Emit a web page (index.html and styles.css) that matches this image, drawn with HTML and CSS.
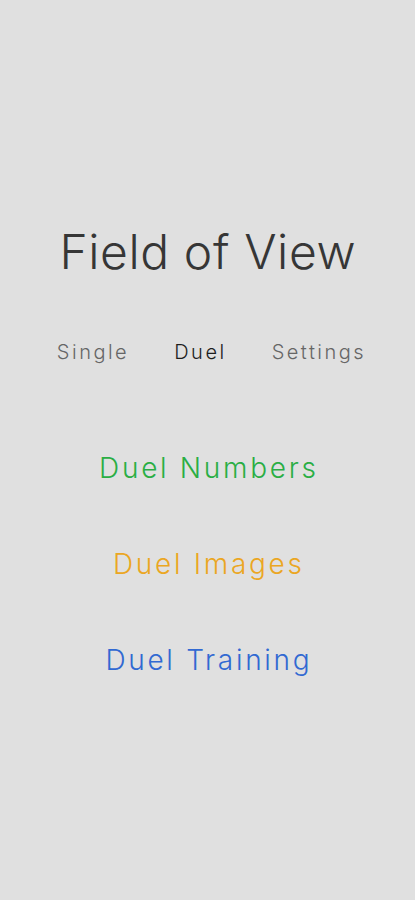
FILE: index.html
```html
<!doctype html>
<html lang="en">
<head>
	<meta charset="UTF-8">
	<title>Field of View</title>
	<link rel="stylesheet" href="styles.css">
</head>
<body>
	<div class="screen">
		<h1 class="title">Field of View</h1>
		<nav class="tabs">
			<span class="tab">Single</span>
			<span class="tab active">Duel</span>
			<span class="tab">Settings</span>
		</nav>
		<ul class="modes">
			<li class="mode numbers">Duel Numbers</li>
			<li class="mode images">Duel Images</li>
			<li class="mode training">Duel Training</li>
		</ul>
	</div>
</body>
</html>
```

FILE: styles.css
```css
html, body {
	margin: 0;
	padding: 0;
	background: #e0e0e0;
}
.screen {
	width: 415px;
	height: 900px;
	display: flex;
	flex-direction: column;
	align-items: center;
	font-family: Inter, "DejaVu Sans", sans-serif;
	font-weight: 300;
}
.title {
	margin: 222px 0 0;
	padding-left: 0.6px;
	font-size: 48px;
	line-height: 60px;
	font-weight: 300;
	letter-spacing: 0.6px;
	color: #363636;
}
.tabs {
	display: flex;
	justify-content: center;
	gap: 45px;
	width: 100%;
	box-sizing: border-box;
	padding-left: 8px;
	margin-top: 55px;
	font-size: 20px;
	line-height: 30px;
	letter-spacing: 2.5px;
}
.tab {
	color: #666666;
}
.tab.active {
	color: #1e1e1e;
}
.modes {
	list-style: none;
	margin: 81px 0 0;
	padding: 0;
	display: flex;
	flex-direction: column;
	align-items: center;
	gap: 56px;
	font-size: 28px;
	line-height: 40px;
	letter-spacing: 2.7px;
}
.mode {
	padding-left: 2.7px;
}
.numbers {
	color: #2aae44;
}
.images {
	color: #eba622;
}
.training {
	color: #3169d2;
}
```
